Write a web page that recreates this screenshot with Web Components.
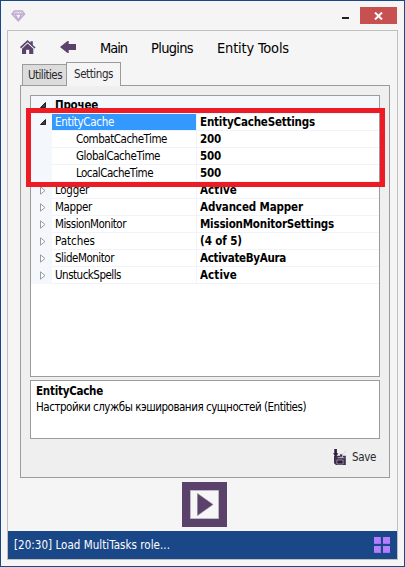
<!DOCTYPE html>
<html lang="ru"><head><meta charset="utf-8"><title>EntityTools</title>
<style>html,body{margin:0;height:100%;overflow:hidden}</style></head>
<body><app-window></app-window>
<script>
const define=(name,markup,setup)=>customElements.define(name,class extends HTMLElement{
  connectedCallback(){
    if(this.shadowRoot)return;
    const t=document.createElement('template');t.innerHTML=markup;
    this.attachShadow({mode:'open'}).append(t.content.cloneNode(true));
    if(setup)setup(this,this.shadowRoot);
  }
});

/* Label whose tracking is adjusted so that it occupies exactly w pixels */
define('fit-label',`<style>:host{display:inline-block;white-space:nowrap}span{display:inline-block;transform-origin:0 50%}</style><span></span>`,(h,r)=>{
  const s=r.querySelector('span');s.textContent=h.getAttribute('text');
  const w=+h.getAttribute('w');h.style.width=w+'px';
  const n=s.textContent.length,cur=s.getBoundingClientRect().width;
  s.style.letterSpacing=((w-cur)/n)+'px';
});

define('title-bar',`<style>
:host{display:flex;height:29px;box-sizing:border-box;padding:6px 7px 0 10px;align-items:flex-start}
.gem{margin-top:3px}.sp{flex:1}.min{width:7px;height:2px;background:#222;margin:10px 11px 0 0}
.x{width:37px;height:17px;background:#c75050;display:grid;place-items:center}svg{display:block}
</style><svg class="gem" width="15" height="12" viewBox="0 0 15 12" fill="none" stroke="#c3acd0" stroke-width="1.5"><path d="M3.4.9h7.7L13.6 4 7.3 10.8 1 4ZM1 4h12.6M4 4l3.3 6.4L10.6 4" /><path d="M3.4.9 5 4l2.3-3L9.8 4l1.4-3" stroke-width=".8"/></svg>
<div class="sp"></div><div class="min"></div><div class="x"><svg width="9" height="8" viewBox="0 0 9 8"><path d="M1 .5 8 7.5M8 .5 1 7.5" stroke="#fff" stroke-width="2"/></svg></div>`);

define('menu-bar',`<style>
:host{display:flex;height:31px;align-items:center;padding:2px 0 0 12px;box-sizing:border-box;font-size:14.5px;color:#000}
svg{display:block}.home{margin:0 24px 1px 0}.back{margin:0 24px 1px 0}fit-label{margin:1px 24px 0 0}
</style><svg class="home" width="16" height="16" viewBox="0 0 16 16" fill="#5a426b"><path d="M0 8.1 7.6 1l2.9 2.7V2.2h2.3v3.7L15.6 8.5 14.5 9.6 7.6 3.3 1 9.4Z"/><path d="M7.6 4.5 13.3 9.8V15H9.2V10.7H6.1V15H2V9.7Z"/></svg>
<svg class="back" width="16" height="14" viewBox="0 0 16 14" fill="#5a426b"><path d="M0 7 7.5 1h1.2v3H16v6H8.7v3H7.5Z"/></svg>
<fit-label text="Main" w="27"></fit-label><fit-label text="Plugins" w="42"></fit-label><fit-label text="Entity Tools" w="72"></fit-label>`);

define('tab-strip',`<style>
:host{display:flex;height:24px;align-items:flex-start;padding-left:14px;position:relative;z-index:1;box-sizing:border-box;margin-bottom:-1px}
div{box-sizing:border-box;border:1px solid #9b9b9b;border-bottom:0;color:#28282e}
.u{width:45px;height:21px;margin-top:2px;background:#dcdcdc;padding:3px 0 0 5px}
.s{width:55px;height:24px;background:#f5f5f5;margin-left:-1px;padding:4px 0 0 7px}
</style><div class="u"><fit-label text="Utilities" w="34"></fit-label></div><div class="s"><fit-label text="Settings" w="39"></fit-label></div>`);

define('grid-row',`<style>
:host{display:grid;grid-template-columns:21px 145px 1fr;height:17px;color:#000}
.g{background:#f4f7fc;display:flex;justify-content:flex-end;padding:4px 6px 0 0}
.n,.v{border-bottom:1px solid #f0f3fb;line-height:16px;height:16px;box-sizing:content-box}
.n{padding-left:3px;border-right:1px solid #f0f3fb}.v{padding-left:3px;font-weight:bold}
:host([child]) .n{padding-left:24px}:host([selected]) .n{background:#3399ff;background-clip:padding-box;color:#fff}
:host([heading]) .n,:host([heading]) .v{background:#f4f7fc;border-color:#f4f7fc;font-weight:bold}
svg{display:block}
</style><div class="g"></div><div class="n"></div><div class="v"></div>`,(h,r)=>{
  const a=k=>h.getAttribute(k);
  r.querySelector('.n').innerHTML=`<fit-label text="${a('name')}" w="${a('nw')}"></fit-label>`;
  if(a('value'))r.querySelector('.v').innerHTML=`<fit-label text="${a('value')}" w="${a('vw')}"></fit-label>`;
  if(h.hasAttribute('child'))return;
  r.querySelector('.g').innerHTML=h.hasAttribute('open')?
   '<svg width="6" height="8" viewBox="0 0 6 8"><path d="M5.5 1.5v5H.5Z" fill="#404040" stroke="#222"/></svg>':
   '<svg width="6" height="9" viewBox="0 0 6 9"><path d="M.5.8v7.4L5 4.5Z" fill="#fff" stroke="#9c9c9c"/></svg>';
});

define('property-grid',`<style>
:host{display:block;height:282px;box-sizing:border-box;border:1px solid #9b9b9b;background:#fff;position:relative}
.top{height:1px;background:#f4f7fc}
.mark{position:absolute;left:-5px;top:12px;width:359px;height:79px;box-sizing:border-box;border:5px solid #ed1c24}
</style><div class="top"></div><slot></slot><div class="mark"></div>`);

define('help-pane',`<style>
:host{display:block;height:59px;margin-top:3px;border:1px solid #9b9b9b;background:#fff;color:#000;box-sizing:border-box;padding:2px 5px;line-height:16px}
b,div{display:block;height:16px}
</style><b><fit-label text="EntityCache" w="67"></fit-label></b><div><fit-label text="Настройки службы кэширования сущностей (Entities)" w="270"></fit-label></div>`);

define('save-button',`<style>:host{display:flex;justify-content:flex-end;align-items:center;gap:5px;height:36px;padding-right:4px;color:#28282e;box-sizing:border-box}svg{display:block}</style>
<svg width="14" height="17" viewBox="0 0 14 17"><path d="M1 6.8h11.8V16H3L1 14.2Z" fill="#40304f"/><path d="M10.3 5 13 1.5" stroke="#ddd7e0"/><path d="M7 5h2.5v3.2H7M4.5 8.7h7" stroke="#d0c8d5" fill="#40304f" stroke-width=".8"/><path d="M3.9 11h6.2v4H3.9Z" fill="#2d1d38" stroke="#a89eb0" stroke-width=".8"/><path d="M1.3 0h2.6v4.3h1.5L2.7 8 0 4.3h1.3Z" fill="#2d1d38"/></svg>
<fit-label text="Save" w="24"></fit-label>`);

define('tab-page',`<style>:host{display:block;margin:0 7px 0 12px;height:393px;box-sizing:border-box;border:1px solid #9b9b9b;background:#efefef;padding:9px}</style><slot></slot>`);

define('play-button',`<style>:host{display:block;width:45px;height:45px;margin:4px auto 0 174px}svg{display:block}</style>
<svg width="45" height="45" viewBox="0 0 45 45"><path d="M0 0h45v45H0Z" fill="#5a426b"/><path d="M8.5 8.5h28v28h-28Z" fill="#f6f6f6" stroke="#c1b6c9"/><path d="M15.5 11.5 31 22.5 15.5 33.5Z" fill="#5a426b" stroke="#8c7a98" stroke-width=".6"/></svg>`);

define('status-bar',`<style>:host{display:flex;justify-content:space-between;align-items:center;height:28px;margin-top:4px;background:#1a4788;color:#fff;padding:0 7px 0 6px;box-sizing:border-box}svg{display:block}</style>
<fit-label text="[20:30] Load MultiTasks role..." w="156"></fit-label>
<svg width="16" height="16" viewBox="0 0 16 16"><path d="M0 0h7v7H0ZM9 0h7v7H9ZM0 9h7v7H0ZM9 9h7v7H9Z" fill="#b280fc"/><path d="M0 6h7v1H0ZM9 6h7v1H9ZM0 15h7v1H0ZM9 15h7v1H9ZM6 0h1v7H6ZM6 9h1v7H6Z" fill="#a170ee"/></svg>`);

define('app-window',`<style>
:host{display:block;width:405px;height:567px;box-sizing:border-box;border:1px solid #1a4788;background:#f5f5f5;font:11.5px/15px "DejaVu Sans Condensed","DejaVu Sans",sans-serif;font-stretch:condensed}
.panel{margin:0 6px;height:530px;border:1px solid #c0c0c0;box-sizing:border-box;width:391px}
</style><title-bar></title-bar><div class="panel"><menu-bar></menu-bar><tab-strip></tab-strip>
<tab-page><property-grid>
<grid-row heading open name="Прочее" nw="43"></grid-row>
<grid-row selected open name="EntityCache" nw="59" value="EntityCacheSettings" vw="115"></grid-row>
<grid-row child name="CombatCacheTime" nw="91" value="200" vw="21"></grid-row>
<grid-row child name="GlobalCacheTime" nw="84" value="500" vw="21"></grid-row>
<grid-row child name="LocalCacheTime" nw="77" value="500" vw="21"></grid-row>
<grid-row name="Logger" nw="34" value="Active" vw="37"></grid-row>
<grid-row name="Mapper" nw="37" value="Advanced Mapper" vw="103"></grid-row>
<grid-row name="MissionMonitor" nw="71" value="MissionMonitorSettings" vw="134"></grid-row>
<grid-row name="Patches" nw="40" value="(4 of 5)" vw="42"></grid-row>
<grid-row name="SlideMonitor" nw="59" value="ActivateByAura" vw="86"></grid-row>
<grid-row name="UnstuckSpells" nw="66" value="Active" vw="37"></grid-row>
</property-grid><help-pane></help-pane><save-button></save-button></tab-page>
<play-button></play-button><status-bar></status-bar></div>`);
</script></body></html>
